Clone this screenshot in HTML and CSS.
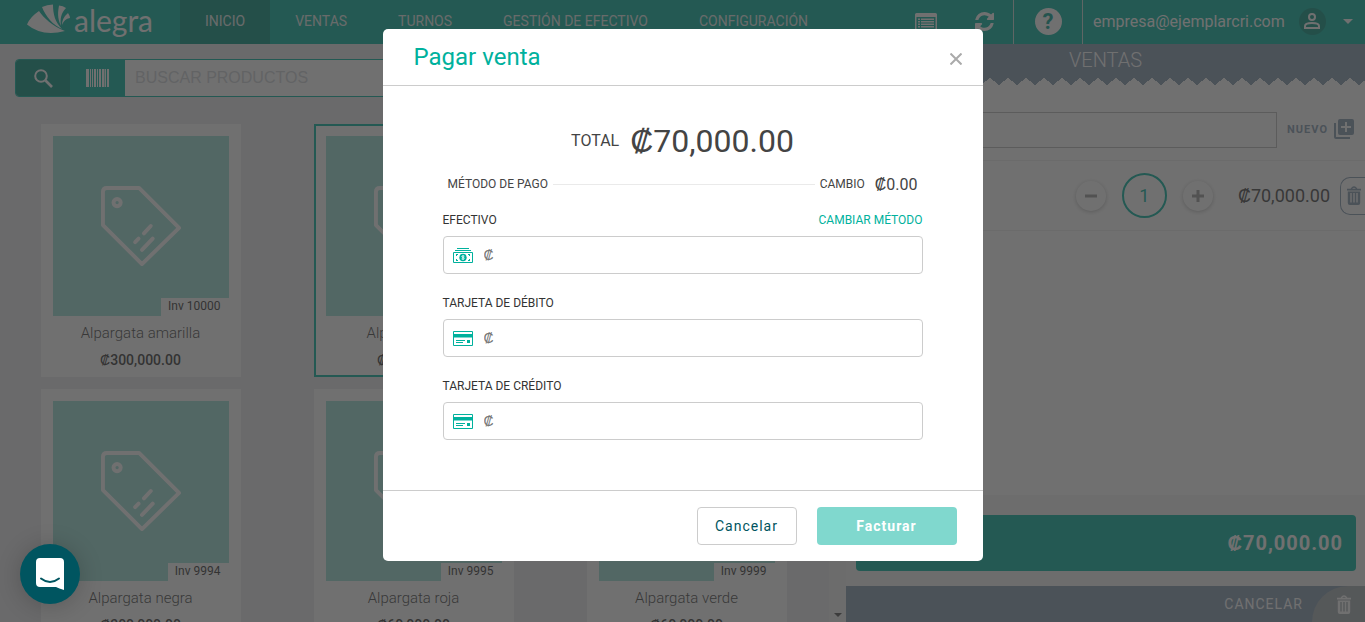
FILE: index.html
```html
<!DOCTYPE html>
<html lang="es">
<head>
<meta charset="utf-8">
<title>Alegra POS</title>
<link rel="stylesheet" href="styles.css">
</head>
<body>
<svg class="sprite" aria-hidden="true">
  <symbol id="tag" viewBox="0 0 82 82"><g fill="none" stroke="currentColor" stroke-width="4" stroke-linecap="round" stroke-linejoin="round"><path d="M6 2H39L80 43L42 80L2 40V6Q2 2 6 2Z"/><circle cx="16.500" cy="17" r="3.700"/><path d="M51 41L44 48.500M53 54L42 65.500M38.500 54L35 57.500"/></g></symbol>
  <symbol id="trash" viewBox="0 0 14 19"><path fill="currentColor" fill-rule="evenodd" d="M0 2.800H3.600L5 1Q7-.4 9 1L10.400 2.800H14V4.400H0ZM5.200 2.800H8.800L8 1.900Q7 1.400 6 1.900ZM.8 5.400H13.200V17Q13.200 19 11.200 19H2.800Q.8 19 .8 17ZM3.300 7V16.500H4.700V7ZM6.300 7V16.500H7.700V7ZM9.300 7V16.500H10.700V7Z"/></symbol>
  <symbol id="card" viewBox="0 0 20 15"><path fill="none" stroke="currentColor" d="M.5.5H19.500V14.500H.5Z"/><path fill="currentColor" d="M0 3H20V6.500H0ZM3 9H12V10H3ZM3 11H10V12H3ZM14 9H17V12H14Z"/></symbol>
</svg>

<div class="app">
  <header class="topbar">
    <a class="logo" href="#">
      <svg width="44" height="30" viewBox="0 0 44 30"><g fill="currentColor"><path d="M0 20.500Q3 13 12 7C17 14 25 22 38 27Q15 33 0 20.500Z"/><path d="M15 3Q20 .5 26 .5C26 10 28 18 35 25C26 21 19 13 15 3Z"/><path d="M32 1.500Q36 1.500 39 4C34 9 33 15 34 22C30 14 31 7 32 1.500Z"/><path d="M41 9Q43 12 43 14Q37 15 35 21Q35 14 41 9Z"/></g></svg>
      <span>alegra</span>
    </a>
    <nav class="nav">
      <a class="active" href="#">INICIO</a>
      <a href="#">VENTAS</a>
      <a href="#">TURNOS</a>
      <a href="#">GESTIÓN DE EFECTIVO</a>
      <a href="#">CONFIGURACIÓN</a>
    </nav>
    <div class="tools">
      <button class="tool" aria-label="Lista"><svg width="22" height="18" viewBox="0 0 22 18"><path fill="currentColor" fill-rule="evenodd" d="M1.500 0H20.500Q22 0 22 1.500V16.500Q22 18 20.500 18H1.500Q0 18 0 16.500V1.500Q0 0 1.500 0ZM1.500 4V16H20.500V4ZM3 5.500H5V7H3ZM6 5.500H19V7H6ZM3 8H5V9.500H3ZM6 8H19V9.500H6ZM3 10.500H5V12H3ZM6 10.500H19V12H6ZM3 13H5V14.500H3ZM6 13H19V14.500H6Z"/></svg></button>
      <button class="tool" aria-label="Actualizar"><svg width="19" height="19" viewBox="0 0 1536 1536"><path fill="currentColor" d="M1511 928q0 5-1 7-64 268-268 434.500T764 1536q-146 0-282.500-55T238 1324l-129 129q-19 19-45 19t-45-19-19-45V960q0-26 19-45t45-19h448q26 0 45 19t19 45-19 45l-137 137q71 66 161 102t187 36q134 0 250-65t186-179q11-17 53-117 8-23 30-23h192q13 0 22.500 9.500t9.500 22.500zm25-800v448q0 26-19 45t-45 19h-448q-26 0-45-19t-19-45 19-45l138-138Q969 256 768 256q-134 0-250 65T332 500q-11 17-53 117-8 23-30 23H50q-13 0-22.500-9.500T18 608v-7q65-268 270-434.500T768 0q146 0 284 55.500T1297 212l130-129q19-19 45-19t45 19 19 45z"/></svg></button>
      <button class="tool help" aria-label="Ayuda"><span>?</span></button>
      <button class="account">
        <span>empresa@ejemplarcri.com</span>
        <i class="avatar"><svg width="16" height="16" viewBox="0 0 16 16"><g fill="none" stroke="currentColor" stroke-width="2"><circle cx="8" cy="4" r="3"/><path d="M1 15V13Q1 10 8 10T15 13V15Z"/></g></svg></i>
        <i class="caret"></i>
      </button>
    </div>
  </header>

  <div class="workspace">
    <main class="catalog">
      <div class="search">
        <button class="find" aria-label="Buscar"><svg width="19" height="19" viewBox="0 0 19 19"><g fill="none" stroke="currentColor" stroke-width="2"><circle cx="7" cy="7" r="5.800"/><path stroke-width="2.600" d="M11.500 11.500L18 18"/></g></svg></button>
        <button class="scan" aria-label="Código de barras"><svg width="23" height="18" viewBox="0 0 23 18"><path fill="currentColor" d="M0 0H3V18H0ZM4 0H5V18H4ZM6 0H7V18H6ZM8 0H10V18H8ZM11 0H12V18H11ZM13 0H15V18H13ZM16 0H18V18H16ZM18.500 0H20V18H18.500ZM21 0H23V18H21Z"/></svg></button>
        <input type="text" placeholder="BUSCAR PRODUCTOS" aria-label="Buscar productos">
      </div>
      <div class="products">
        <article class="product"><div class="thumb"><svg width="80" height="82"><use href="#tag"/></svg><span>Inv 10000</span></div><h3>Alpargata amarilla</h3><b>₡300,000.00</b></article>
        <article class="product selected"><div class="thumb"><svg width="80" height="82"><use href="#tag"/></svg><span>Inv 9998</span></div><h3>Alpargata azul</h3><b>₡70,000.00</b></article>
        <article class="product"><div class="thumb"><svg width="80" height="82"><use href="#tag"/></svg><span>Inv 9997</span></div><h3>Alpargata gris</h3><b>₡60,000.00</b></article>
        <article class="product"><div class="thumb"><svg width="80" height="82"><use href="#tag"/></svg><span>Inv 9994</span></div><h3>Alpargata negra</h3><b>₡300,000.00</b></article>
        <article class="product"><div class="thumb"><svg width="80" height="82"><use href="#tag"/></svg><span>Inv 9995</span></div><h3>Alpargata roja</h3><b>₡60,000.00</b></article>
        <article class="product"><div class="thumb"><svg width="80" height="82"><use href="#tag"/></svg><span>Inv 9999</span></div><h3>Alpargata verde</h3><b>₡60,000.00</b></article>
      </div>
    </main>
    <div class="scrollbar"><i class="caret"></i></div>
    <aside class="sale">
      <h2>VENTAS</h2>
      <div class="zigzag"></div>
      <div class="client">
        <input type="text" aria-label="Cliente">
        <button>NUEVO <svg width="20" height="20" viewBox="0 0 20 20"><path fill="currentColor" fill-rule="evenodd" d="M6 0H18Q20 0 20 2V14Q20 16 18 16H6Q4 16 4 14V2Q4 0 6 0ZM11 3V7H7V9H11V13H13V9H17V7H13V3ZM0 4H2V18H16V20H2Q0 20 0 18Z"/></svg></button>
      </div>
      <div class="line">
        <button class="step" aria-label="Menos"><svg width="12" height="12" viewBox="0 0 12 12"><path stroke="currentColor" stroke-width="3" d="M0 6H12"/></svg></button>
        <span class="qty">1</span>
        <button class="step" aria-label="Más"><svg width="12" height="12" viewBox="0 0 12 12"><path stroke="currentColor" stroke-width="3" d="M0 6H12M6 0V12"/></svg></button>
        <span class="amount">₡70,000.00</span>
        <button class="remove" aria-label="Eliminar"><svg width="14" height="19"><use href="#trash"/></svg></button>
      </div>
      <div class="checkout">
        <button class="pay">₡70,000.00</button>
        <button class="void">CANCELAR <i><svg width="14" height="19"><use href="#trash"/></svg></i></button>
      </div>
    </aside>
  </div>
</div>

<div class="backdrop">
  <section class="modal" role="dialog" aria-labelledby="title">
    <header class="modal-head">
      <h1 id="title">Pagar venta</h1>
      <button aria-label="Cerrar"><svg width="12" height="12" viewBox="0 0 12 12"><path stroke="currentColor" stroke-width="2" d="M.5.5L11.500 11.500M11.500.5L.5 11.500"/></svg></button>
    </header>
    <form class="modal-body">
      <p class="total"><span>TOTAL</span> <strong>₡70,000.00</strong></p>
      <p class="change"><span>MÉTODO DE PAGO</span><i></i><span>CAMBIO</span><strong>₡0.00</strong></p>
      <div class="field">
        <div class="caption"><label for="cash">EFECTIVO</label><a href="#">CAMBIAR MÉTODO</a></div>
        <div class="box"><svg width="20" height="15" viewBox="0 0 20 15"><path fill="currentColor" d="M4 0H16V1H4ZM2 2H18V3H2ZM3 6H5V7H4V8H3ZM15 6H17V8H16V7H15ZM3 11H4V12H5V13H3ZM16 11H17V13H15V12H16Z"/><path fill="none" stroke="currentColor" d="M.5 4.500H19.500V14.500H.5Z"/><circle cx="10" cy="9.500" r="3.700" fill="currentColor"/><path fill="none" stroke="#fff" stroke-width=".8" d="M11.400 8.200Q8.800 7.400 8.800 8.700C8.800 9.700 11.300 9.300 11.300 10.400Q11.200 11.500 8.600 10.900M10 7V12"/></svg><input id="cash" type="text" placeholder="₡"></div>
      </div>
      <div class="field">
        <div class="caption"><label for="debit">TARJETA DE DÉBITO</label></div>
        <div class="box"><svg width="20" height="15"><use href="#card"/></svg><input id="debit" type="text" placeholder="₡"></div>
      </div>
      <div class="field">
        <div class="caption"><label for="credit">TARJETA DE CRÉDITO</label></div>
        <div class="box"><svg width="20" height="15"><use href="#card"/></svg><input id="credit" type="text" placeholder="₡"></div>
      </div>
    </form>
    <footer class="modal-foot">
      <button class="cancel">Cancelar</button>
      <button class="invoice">Facturar</button>
    </footer>
  </section>
</div>

<button class="chat" aria-label="Abrir chat"><svg width="28" height="32" viewBox="0 0 28 32"><path fill="#fff" d="M4 0H24Q28 0 28 4V32Q23 30.500 20 29H4Q0 29 0 25V4Q0 0 4 0Z"/><path fill="none" stroke="#005560" stroke-width="2" stroke-linecap="round" d="M5 20.500Q14 27.500 23 20.500"/></svg></button>
</body>
</html>
```

FILE: styles.css
```css
* { box-sizing: border-box; }
body { margin: 0; font-family: Roboto, "Liberation Sans", sans-serif; font-size: 14px; color: #444; overflow: hidden; }
button, input { font: inherit; color: inherit; background: none; border: 0; padding: 0; }
a { color: inherit; text-decoration: none; }
h1, h2, h3, p { margin: 0; font-weight: 400; }
svg { display: block; flex: none; }
.sprite { position: absolute; width: 0; height: 0; }

.app { display: flex; flex-direction: column; height: 100vh; background: #e9ecef; }

.topbar { display: flex; height: 44px; flex: none; background: #00b19d; color: #e4eeec; }
.logo { display: flex; gap: 3px; width: 180px; padding-left: 27px; color: #fff; font: 400 30px/40px Lato, sans-serif; }
.logo svg { margin-top: 4px; }
.nav { display: flex; line-height: 42px; }
.nav a { padding: 0 25px; }
.nav a + a { padding-right: 26px; }
.nav .active { background: #008f7e; }
.tools { display: flex; margin-left: auto; }
.tool { display: flex; align-items: center; justify-content: center; width: 58px; padding-bottom: 1px; color: #fff; }
.help { width: 70px; border: solid #c5dedb; border-width: 0 1px; }
.help span { width: 27px; border-radius: 50%; background: #fff; color: #00a090; font: 700 22px/27px Roboto, sans-serif; }
.account { display: flex; align-items: center; width: 282px; padding: 0 0 2px 10px; font-size: 16px; color: #fff; }
.avatar { display: grid; place-items: center; width: 27px; height: 27px; margin-left: 14px; border-radius: 50%; background: #008f7e; }
.caret { border: solid transparent; border-width: 5px 5px 0; border-top-color: currentColor; }
.account .caret { margin-left: 17px; }

.workspace { display: flex; flex: 1; min-height: 0; }
.catalog { flex: 1; min-width: 0; padding: 15px 6px 0 4px; overflow: hidden; }
.search { display: flex; height: 38px; margin: 0 11px 27px; border: 1px solid #00b19d; border-radius: 4px; background: #fff; overflow: hidden; }
.search button { display: grid; place-items: center; width: 55px; color: #fff; background: #00b19d; }
.search .find { width: 54px; background: #008f7e; }
.search input { flex: 1; padding-left: 10px; font: 16px "Liberation Sans", sans-serif; }
.search input::placeholder { color: #d0d3d8; }
.products { display: grid; grid-template-columns: repeat(3, 1fr); justify-items: center; row-gap: 12px; }
.product { width: 200px; height: 253px; padding: 10px; border: 2px solid #fff; background: #fff; text-align: center; }
.product.selected { border-color: #00b19d; }
.thumb { display: grid; place-items: center; position: relative; height: 180px; background: #99e0d8; color: #fff; }
.thumb span { position: absolute; right: 0; bottom: 0; padding: 0 8px 2px 7px; background: #fff; color: #333; font-size: 12px; line-height: 16px; }
.product h3 { margin-top: 7px; font-size: 15px; line-height: 20px; font-weight: 300; }
.product b { display: block; margin-top: 7px; line-height: 20px; font-weight: 500; color: #333; }

.scrollbar { display: flex; align-items: flex-end; justify-content: center; width: 17px; padding-bottom: 5px; background: #f1f1f1; color: #505050; }
.scrollbar .caret { border-width: 4px 4px 0; }

.sale { display: flex; flex-direction: column; width: 519px; background: #fff; overflow: hidden; }
.sale h2 { height: 34px; line-height: 33px; background: #8299b0; color: #fff; font-size: 20px; font-weight: 300; text-align: center; }
.zigzag { height: 7px; background: conic-gradient(from -52deg at 50% 100%, #8299b0 104deg, transparent 0) 0 0 / 18px 7px; }
.client { display: flex; gap: 10px; margin: 27px 11px 12px 10px; }
.client input { flex: 1; height: 36px; border: 1px solid #bbb; }
.client button { display: flex; align-items: center; gap: 6px; padding-bottom: 2px; color: #8299b0; font-size: 11px; font-weight: 700; letter-spacing: 1px; }
.line { display: flex; align-items: center; justify-content: flex-end; height: 71px; border: solid #eee; border-width: 1px 0; }
.step { display: grid; place-items: center; width: 30px; height: 30px; border-radius: 50%; box-shadow: 0 1px 4px #bbb; color: #999; }
.qty { width: 45px; margin: 0 16px; border: 2px solid #00b19d; border-radius: 50%; color: #00b19d; font-size: 18px; line-height: 41px; text-align: center; }
.amount { margin: 0 10px 0 25px; font-size: 18px; }
.remove { display: flex; align-items: center; width: 25px; height: 38px; padding-left: 6px; border: 1px solid #8299b0; border-right: 0; border-radius: 10px 0 0 10px; color: #8299b0; }
.checkout { margin-top: auto; padding-top: 20px; background: #f5f5f5; }
.pay { display: block; width: calc(100% - 19px); height: 56px; margin: 0 9px 15px 10px; padding-right: 13px; border-radius: 4px; background: #00b19d; color: #fff; font-size: 20px; font-weight: 700; letter-spacing: 1px; text-align: right; }
.void { display: flex; align-items: center; justify-content: flex-end; gap: 9px; width: 100%; height: 36px; background: #8299b0; color: #fff; letter-spacing: 1px; }
.void i { display: flex; align-items: center; width: 53px; height: 36px; padding-left: 25px; border-radius: 36px 0 0 0; background: #a5adb2; }

.backdrop { position: fixed; inset: 0; display: flex; align-items: flex-start; justify-content: center; padding-top: 29px; background: rgba(51, 51, 51, .7); }
.modal { width: 600px; border-radius: 5px; background: #fff; }
.modal-head { display: flex; align-items: center; justify-content: space-between; height: 57px; padding: 0 21px 0 31px; border-bottom: 1px solid #ccc; color: #aaa; }
.modal-head h1 { color: #00b19d; font-size: 24px; }
.modal-head button { padding-top: 4px; }
.modal-body { padding: 32px 60px 50px; }
.total { display: flex; align-items: center; justify-content: center; gap: 11px; line-height: 46px; font-size: 16px; }
.total strong { font-size: 32px; font-weight: 400; }
.change { display: flex; align-items: center; height: 24px; margin: 8px 5px 14px; font-size: 12px; }
.change i { flex: 1; height: 1px; margin: 0 5px; background: #eaeaea; }
.change strong { margin-left: 10px; font-size: 16px; font-weight: 400; }
.field + .field { margin-top: 19px; }
.caption { display: flex; justify-content: space-between; height: 26px; font-size: 12px; line-height: 20px; color: #333; }
.caption a { color: #00b19d; }
.box { display: flex; align-items: center; gap: 11px; height: 38px; padding-left: 9px; border: 1px solid #ccc; border-radius: 4px; color: #00b19d; }
.box input { flex: 1; height: 36px; color: #444; }
.box input::placeholder { color: #777; }
.modal-foot { display: flex; justify-content: flex-end; gap: 20px; padding: 16px 26px; border-top: 1px solid #ccc; }
.modal-foot button { height: 38px; border-radius: 4px; letter-spacing: 1px; }
.cancel { width: 100px; border: 1px solid #ccc; color: #005560; }
.invoice { width: 140px; background: #80d8ce; color: #fff; font-weight: 700; }

.chat { position: fixed; left: 20px; bottom: 18px; display: grid; place-items: center; width: 60px; height: 60px; border-radius: 50%; background: #005560; box-shadow: 0 2px 24px rgba(0, 0, 0, .2); }
```
